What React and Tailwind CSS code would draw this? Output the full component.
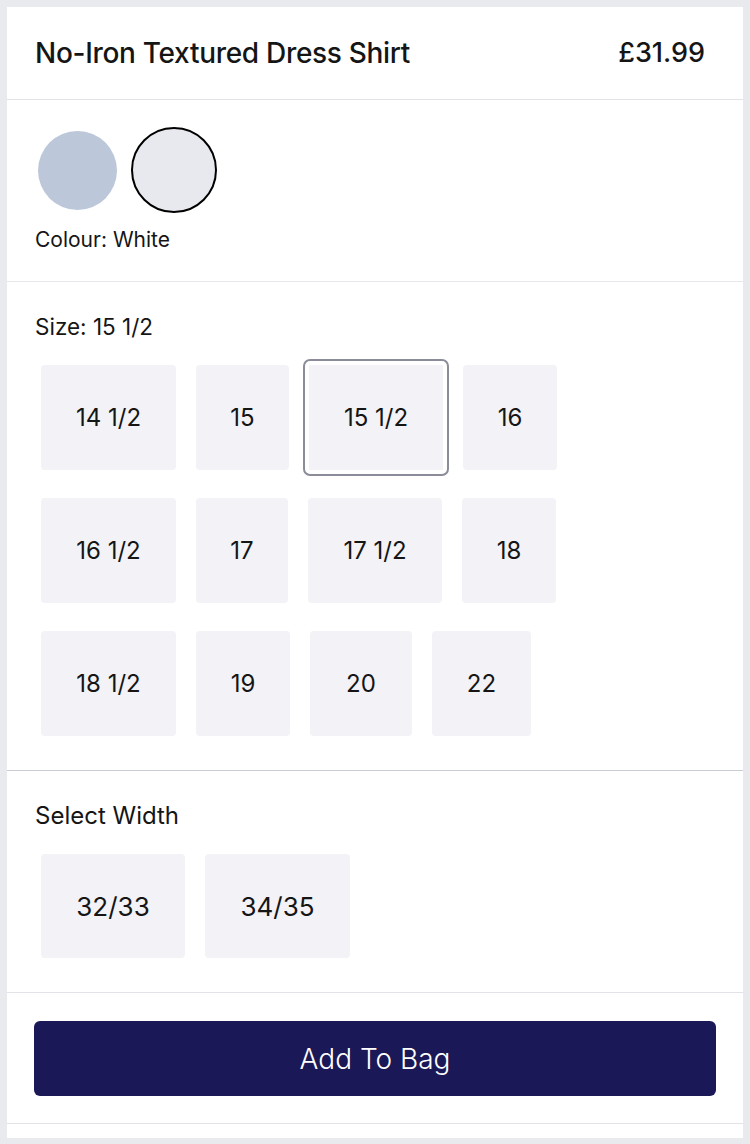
// Product options panel: colour swatches, size / width pickers, add to bag
import React from 'react'

const sizes = [
  [
    { label: '14 1/2', w: 'w-[135px]' },
    { label: '15', w: 'w-[93px]' },
    { label: '15 1/2', w: 'w-[134px]', selected: true },
    { label: '16', w: 'w-[94px]' },
  ],
  [
    { label: '16 1/2', w: 'w-[135px]' },
    { label: '17', w: 'w-[92px]' },
    { label: '17 1/2', w: 'w-[134px]' },
    { label: '18', w: 'w-[94px]' },
  ],
  [
    { label: '18 1/2', w: 'w-[135px]' },
    { label: '19', w: 'w-[94px]' },
    { label: '20', w: 'w-[102px]' },
    { label: '22', w: 'w-[99px]' },
  ],
]

function OptionButton({ label, w, selected, h = 'h-[105px]', text = 'text-[24px]' }) {
  return (
    <button
      className={
        'flex items-center justify-center bg-[#f2f2f7] text-[#151515] ' +
        w + ' ' + h + ' ' + text +
        (selected ? ' rounded-[1px] outline-2 outline-[#8a8c99] outline-offset-4' : ' rounded-[4px]')
      }
    >
      {label}
    </button>
  )
}

export default function App() {
  return (
    <div className="min-h-[1144px] bg-[#e9eaed] px-[7px] pt-[7px] font-['Inter',sans-serif] text-[#151515]">
      <div className="bg-white">
        {/* header */}
        <div className="flex h-[93px] items-center justify-between border-b border-[#e2e3e8] pl-[28px] pr-[38px]">
          <h1 className="text-[28px] font-medium tracking-[-0.3px]">No-Iron Textured Dress Shirt</h1>
          <span className="text-[27px] font-medium">£31.99</span>
        </div>

        {/* colour */}
        <div className="border-b border-[#e6e7ea] pl-[31px] pt-[27px] pb-[29px]">
          <div className="flex items-center gap-[14px]">
            <div className="h-[79px] w-[79px] rounded-full bg-[#bcc7da]" />
            <div className="h-[86px] w-[86px] rounded-full border-2 border-black bg-[#e8e9ee]" />
          </div>
          <div className="ml-[-3px] mt-[15px] text-[21px] leading-[24px]">Colour: White</div>
        </div>

        {/* size */}
        <div className="border-b border-[#c9cdd5] pl-[34px] pt-[31px] pb-[34px]">
          <div className="ml-[-6px] text-[22.5px] leading-[28px]">Size: 15 1/2</div>
          <div className="mt-[24px] flex flex-col gap-[28px]">
            {sizes.map((row, i) => (
              <div key={i} className="flex gap-[20px]">
                {row.map((s) => (
                  <OptionButton key={s.label} {...s} />
                ))}
              </div>
            ))}
          </div>
        </div>

        {/* width */}
        <div className="border-b border-[#e2e3e8] pl-[34px] pt-[31px] pb-[34px]">
          <div className="ml-[-6px] text-[24px] leading-[28px]">Select Width</div>
          <div className="mt-[24px] flex gap-[20px]">
            <OptionButton label="32/33" w="w-[144px]" h="h-[104px]" text="text-[26px]" />
            <OptionButton label="34/35" w="w-[145px]" h="h-[104px]" text="text-[26px]" />
          </div>
        </div>

        {/* add to bag */}
        <div className="border-b border-[#e2e3e8] px-[27px] pt-[28px] pb-[27px]">
          <button className="flex h-[75px] w-full items-center justify-center rounded-[6px] bg-[#1a1856] text-[28px] font-light text-white">
            Add To Bag
          </button>
        </div>
        <div className="h-[14px]" />
      </div>
    </div>
  )
}
